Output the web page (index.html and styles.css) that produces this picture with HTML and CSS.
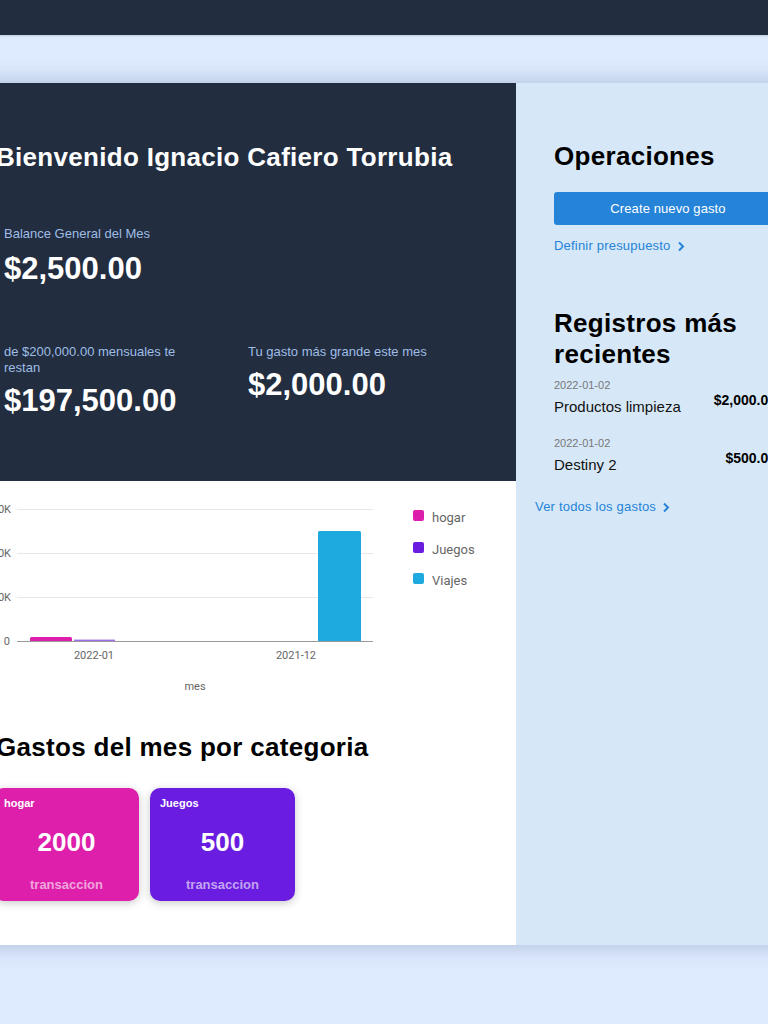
FILE: index.html
```html
<!DOCTYPE html>
<html lang="es">
<head>
<meta charset="utf-8">
<title>Dashboard</title>
<link rel="stylesheet" href="styles.css">
</head>
<body>
<header class="topbar"></header>
<main class="page">
  <div class="card">
    <section class="left">
      <div class="hero">
        <h1 class="title-light">Bienvenido Ignacio Cafiero Torrubia</h1>
        <div class="stats">
          <div class="stat">
            <div class="stat-label">Balance General del Mes</div>
            <div class="stat-value">$2,500.00</div>
          </div>
          <div class="stat"></div>
          <div class="stat row2">
            <div class="stat-label">de $200,000.00 mensuales te restan</div>
            <div class="stat-value">$197,500.00</div>
          </div>
          <div class="stat row2">
            <div class="stat-label">Tu gasto más grande este mes</div>
            <div class="stat-value">$2,000.00</div>
          </div>
        </div>
      </div>
      <div class="content">
        <svg class="chart" width="520" height="210" viewBox="-4 495 520 210" xmlns="http://www.w3.org/2000/svg">
          <g stroke="#e8e8e8" stroke-width="1">
            <line x1="17" y1="509.5" x2="373" y2="509.5"/>
            <line x1="17" y1="553.5" x2="373" y2="553.5"/>
            <line x1="17" y1="597.5" x2="373" y2="597.5"/>
          </g>
          <g font-family="Roboto, 'Liberation Sans', sans-serif" font-size="11" fill="#666" text-anchor="end">
            <text x="11" y="513">60K</text>
            <text x="11" y="557">40K</text>
            <text x="11" y="601">20K</text>
            <text x="10" y="645">0</text>
          </g>
          <path d="M30 641 V638.5 Q30 637 31.5 637 H70.5 Q72 637 72 638.5 V641 Z" fill="#dd1fab"/>
          <rect x="74" y="639.6" width="41" height="1.6" fill="#9d6fea"/>
          <path d="M318 641 V532.5 Q318 531 319.5 531 H359.5 Q361 531 361 532.5 V641 Z" fill="#1eaadf"/>
          <line x1="17" y1="641.5" x2="373" y2="641.5" stroke="#9a9a9a" stroke-width="1"/>
          <g font-family="Roboto, 'Liberation Sans', sans-serif" font-size="11" fill="#666" text-anchor="middle">
            <text x="94" y="659">2022-01</text>
            <text x="296" y="659">2021-12</text>
            <text x="195" y="690">mes</text>
          </g>
          <g font-family="Roboto, 'Liberation Sans', sans-serif" font-size="13" fill="#666">
            <rect x="413" y="510" width="11" height="11" rx="2" fill="#dd1fab"/>
            <text x="432" y="522">hogar</text>
            <rect x="413" y="542" width="11" height="11" rx="2" fill="#6a1de0"/>
            <text x="432" y="554">Juegos</text>
            <rect x="413" y="573" width="11" height="11" rx="2" fill="#1eaadf"/>
            <text x="432" y="585">Viajes</text>
          </g>
        </svg>
        <h2 class="title-dark">Gastos del mes por categoria</h2>
        <div class="categories">
          <div class="cat cat-hogar">
            <div class="cat-name">hogar</div>
            <div class="cat-value">2000</div>
            <div class="cat-unit">transaccion</div>
          </div>
          <div class="cat cat-juegos">
            <div class="cat-name">Juegos</div>
            <div class="cat-value">500</div>
            <div class="cat-unit">transaccion</div>
          </div>
        </div>
      </div>
    </section>
    <aside class="right">
      <h2 class="title-dark">Operaciones</h2>
      <button class="btn-primary" type="button">Create nuevo gasto</button>
      <a class="link" href="#">Definir presupuesto
        <svg class="chev" width="8" height="11" viewBox="0 0 8 11"><path d="M2 1.5 L6 5.5 L2 9.5" fill="none" stroke="#2583d8" stroke-width="2"/></svg>
      </a>
      <h2 class="title-dark records-title">Registros más recientes</h2>
      <ul class="records">
        <li class="record">
          <div class="record-info">
            <div class="record-date">2022-01-02</div>
            <div class="record-name">Productos limpieza</div>
          </div>
          <div class="record-amount">$2,000.00</div>
        </li>
        <li class="record">
          <div class="record-info">
            <div class="record-date">2022-01-02</div>
            <div class="record-name">Destiny 2</div>
          </div>
          <div class="record-amount">$500.00</div>
        </li>
      </ul>
      <a class="link link-all" href="#">Ver todos los gastos
        <svg class="chev" width="8" height="11" viewBox="0 0 8 11"><path d="M2 1.5 L6 5.5 L2 9.5" fill="none" stroke="#2583d8" stroke-width="2"/></svg>
      </a>
    </aside>
  </div>
</main>
</body>
</html>
```

FILE: styles.css
```css
* { box-sizing: border-box; }
html, body { margin: 0; padding: 0; }
body {
  background: #deebff;
  font-family: "Liberation Sans", Arial, sans-serif;
  overflow: hidden;
}
.topbar {
  height: 35px;
  background: #222d3f;
  box-shadow: 0 1px 2px rgba(0,0,0,0.15);
}
.page {
  display: flex;
  justify-content: center;
  padding: 48px 0 80px;
}
.card {
  flex: 0 0 872px;
  width: 872px;
  display: flex;
  box-shadow: 0 0 22px rgba(40, 60, 100, 0.28);
}
.left {
  width: 568px;
  flex: 0 0 568px;
  background: #fff;
}
.hero {
  background: #222d3f;
  padding: 59px 48px 62px;
}
.title-light, .title-dark {
  margin: 0;
  font-size: 26px;
  line-height: 30px;
  font-weight: bold;
  letter-spacing: 0.3px;
}
.title-light { color: #fff; }
.title-dark { color: #000; }
.stats {
  display: grid;
  grid-template-columns: 210px 210px;
  column-gap: 34px;
  row-gap: 57px;
  margin: 54px 0 0 8px;
}
.stat-label {
  font-size: 13px;
  line-height: 16px;
  color: #9fbde6;
}
.stat-value {
  margin-top: 9px;
  font-size: 31px;
  line-height: 36px;
  font-weight: bold;
  color: #fff;
}
.row2 .stat-value {
  margin-top: 7px;
}
.content {
  padding: 14px 48px 44px;
}
.chart {
  display: block;
}
.content .title-dark {
  margin-top: 27px;
}
.categories {
  display: flex;
  gap: 11px;
  margin: 26px 0 0 -2px;
}
.cat {
  width: 145px;
  height: 113px;
  border-radius: 10px;
  padding: 9px 10px 0;
  color: #fff;
  box-shadow: 0 2px 8px rgba(0,0,0,0.22);
  display: flex;
  flex-direction: column;
}
.cat-hogar { background: #dd1fab; }
.cat-juegos { background: #6a1de0; }
.cat-name {
  font-size: 11px;
  line-height: 13px;
  font-weight: bold;
}
.cat-value {
  margin-top: 17px;
  text-align: center;
  font-size: 26px;
  line-height: 30px;
  font-weight: bold;
}
.cat-unit {
  margin-top: 20px;
  text-align: center;
  font-size: 13px;
  line-height: 16px;
  font-weight: bold;
  color: rgba(255,255,255,0.6);
}
.right {
  width: 304px;
  flex: 0 0 304px;
  background: #d6e8f7;
  padding: 58px 38px 40px;
  display: flex;
  flex-direction: column;
  align-items: flex-start;
}
.btn-primary {
  margin-top: 21px;
  width: 228px;
  height: 33px;
  border: none;
  border-radius: 3px;
  background: #2583d8;
  color: #fff;
  font-family: "Liberation Sans", Arial, sans-serif;
  font-size: 13px;
  letter-spacing: 0.1px;
  cursor: pointer;
}
.link {
  display: inline-flex;
  align-items: center;
  gap: 6px;
  color: #2583d8;
  font-size: 13px;
  line-height: 16px;
  letter-spacing: 0.2px;
  text-decoration: none;
}
.right > .link { margin-top: 13px; }
.chev { display: block; }
.records-title {
  margin-top: 54px !important;
  line-height: 31px;
}
.records {
  list-style: none;
  margin: 9px 0 0;
  padding: 0;
  width: 222px;
}
.record {
  display: flex;
  align-items: center;
  justify-content: space-between;
  margin-bottom: 20px;
}
.record-date {
  font-size: 11px;
  line-height: 13px;
  color: #777;
}
.record-name {
  margin-top: 5px;
  font-size: 15px;
  line-height: 20px;
  color: #111;
}
.record-amount {
  margin-top: 3px;
  font-size: 14px;
  font-weight: bold;
  color: #000;
}
.right > .link-all {
  margin: 4px 0 0 -19px;
}
```
